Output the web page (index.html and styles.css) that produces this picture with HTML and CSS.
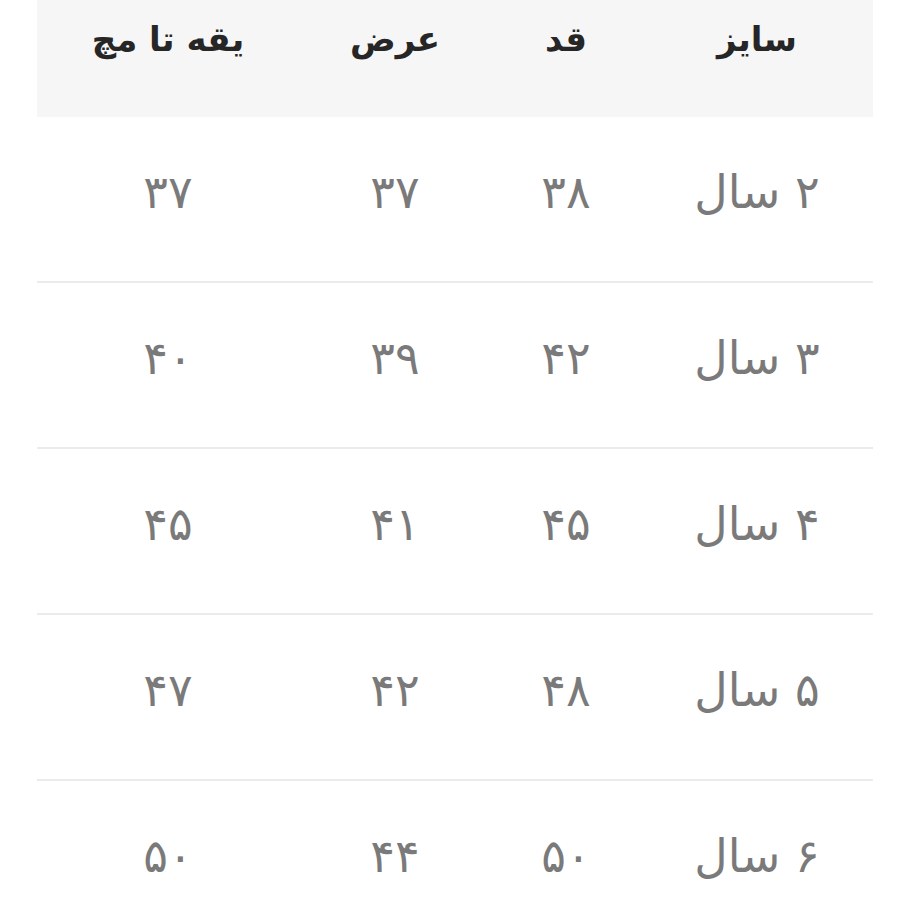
FILE: index.html
```html
<!DOCTYPE html>
<html lang="fa" dir="rtl">
<head>
<meta charset="utf-8">
<link rel="stylesheet" href="styles.css">
</head>
<body>
<div class="table">
  <div class="row head">
    <div class="cell">سایز</div>
    <div class="cell">قد</div>
    <div class="cell">عرض</div>
    <div class="cell">یقه تا مچ</div>
  </div>
  <div class="row">
    <div class="cell">۲ سال</div>
    <div class="cell">۳۸</div>
    <div class="cell">۳۷</div>
    <div class="cell">۳۷</div>
  </div>
  <div class="row">
    <div class="cell">۳ سال</div>
    <div class="cell">۴۲</div>
    <div class="cell">۳۹</div>
    <div class="cell">۴۰</div>
  </div>
  <div class="row">
    <div class="cell">۴ سال</div>
    <div class="cell">۴۵</div>
    <div class="cell">۴۱</div>
    <div class="cell">۴۵</div>
  </div>
  <div class="row">
    <div class="cell">۵ سال</div>
    <div class="cell">۴۸</div>
    <div class="cell">۴۲</div>
    <div class="cell">۴۷</div>
  </div>
  <div class="row last">
    <div class="cell">۶ سال</div>
    <div class="cell">۵۰</div>
    <div class="cell">۴۴</div>
    <div class="cell">۵۰</div>
  </div>
</div>
</body>
</html>
```
FILE: styles.css
```css
html, body {
  margin: 0;
  padding: 0;
  background: #ffffff;
}
body {
  font-family: "DejaVu Sans", "Noto Sans", sans-serif;
}
.table {
  margin: 0 27px 0 37px;
  width: 836px;
  direction: rtl;
}
.row {
  display: grid;
  grid-template-columns: 232px 150px 192px 262px;
  height: 164px;
  align-items: center;
  border-bottom: 2px solid #ebebeb;
  color: #7a7a7a;
  font-size: 46px;
}
.row.head {
  height: 117px;
  border-bottom: none;
  background: #f6f6f6;
  align-items: start;
  color: #262626;
  font-weight: bold;
  font-size: 34px;
}
.cell {
  text-align: center;
  line-height: 1.2;
  padding-bottom: 12px;
}
.row.head .cell {
  padding-top: 19px;
  padding-bottom: 0;
}
```
